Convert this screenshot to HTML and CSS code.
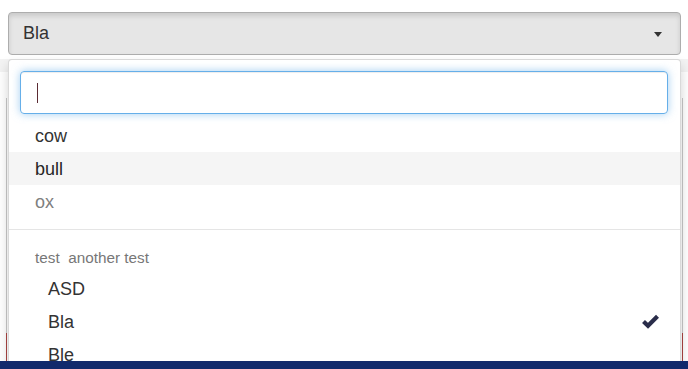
FILE: index.html
```html
<!DOCTYPE html>
<html>
<head>
<meta charset="utf-8">
<link rel="stylesheet" href="styles.css">
</head>
<body>
<div class="page">
  <div class="select-wrap">
    <div class="btn-select">
      <span class="btn-text">Bla</span>
      <span class="btn-caret"></span>
    </div>
    <div class="menu">
      <div class="searchbox">
        <div class="search-input"><span class="text-caret"></span></div>
      </div>
      <ul class="items">
        <li class="item">cow</li>
        <li class="item active">bull</li>
        <li class="item disabled">ox</li>
        <li class="divider"></li>
        <li class="header">test&nbsp; another test</li>
        <li class="item opt">ASD</li>
        <li class="item opt selected">Bla
          <svg class="check" width="19" height="16" viewBox="0 0 19 16"><path d="M2.5 8.5 L7 12.8 L16.5 3.2" fill="none" stroke="#2a2d4a" stroke-width="4.2" stroke-linejoin="miter" stroke-linecap="butt"/></svg>
        </li>
        <li class="item opt">Ble</li>
      </ul>
    </div>
  </div>
  <div class="under-strip"></div>
  <div class="under-panel"></div>
  <div class="under-error"></div>
</div>
<div class="footer-bar"></div>
</body>
</html>
```
FILE: styles.css
```css
html, body {
  margin: 0;
  padding: 0;
  background: #fff;
  font-family: "Liberation Sans", Arial, sans-serif;
  color: #333;
  overflow: hidden;
}
.page {
  padding-top: 12px;
}
.select-wrap {
  position: relative;
  margin: 0 7px 0 8px;
  z-index: 2;
}
.btn-select {
  box-sizing: border-box;
  height: 43px;
  display: flex;
  align-items: center;
  justify-content: space-between;
  padding: 0 18px 0 14px;
  background: #e6e6e6;
  border: 1px solid #adadad;
  border-radius: 4px;
  box-shadow: inset 0 3px 5px rgba(0,0,0,.125);
  font-size: 18px;
  color: #333;
}
.btn-caret {
  width: 0;
  height: 0;
  border-top: 5px solid #333;
  border-left: 4px solid transparent;
  border-right: 4px solid transparent;
  margin-top: 1px;
}
.menu {
  position: absolute;
  left: 0;
  right: 0;
  top: calc(100% + 4px);
  background: #fff;
  border: 1px solid rgba(0,0,0,.15);
  border-radius: 4px;
  box-shadow: 0 6px 12px rgba(0,0,0,.175);
  padding: 6px 0 6px;
}
.searchbox {
  padding: 5px 12px 5px 11px;
}
.search-input {
  box-sizing: border-box;
  height: 43px;
  border: 1px solid #66afe9;
  border-radius: 4px;
  box-shadow: inset 0 1px 1px rgba(0,0,0,.075), 0 0 8px rgba(102,175,233,.6);
  padding: 0 16px;
  display: flex;
  align-items: center;
}
.text-caret {
  display: block;
  width: 1px;
  height: 20px;
  background: #5b2b33;
}
.items {
  list-style: none;
  margin: 0;
  padding: 0;
}
.item {
  position: relative;
  font-size: 18px;
  line-height: 25px;
  padding: 5px 26px 3px;
  color: #333;
}
.item.active {
  background: #f5f5f5;
  color: #262626;
}
.item.disabled {
  color: #808080;
}
.item.opt {
  padding-left: 39px;
}
.divider {
  height: 1px;
  margin: 11px 0 12px;
  background: #e5e5e5;
}
.header {
  font-size: 15.3px;
  line-height: 22px;
  padding: 5px 26px 3px;
  color: #777;
}
.check {
  position: absolute;
  right: 20px;
  top: 8px;
}
.under-strip {
  margin-top: 4px;
  height: 13px;
  background: #f3f3f3;
}
.under-panel {
  margin: 26px 5px 0 6px;
  height: 235px;
  border-left: 1px solid #c8c8c8;
  border-right: 1px solid #c8c8c8;
}
.under-error {
  margin: 0 5px 0 6px;
  height: 40px;
  border-left: 1px solid #a94442;
  border-right: 1px solid #a94442;
}
.footer-bar {
  position: fixed;
  left: 0;
  right: 0;
  bottom: 0;
  height: 8px;
  background: #112a6c;
  z-index: 5;
}
```
